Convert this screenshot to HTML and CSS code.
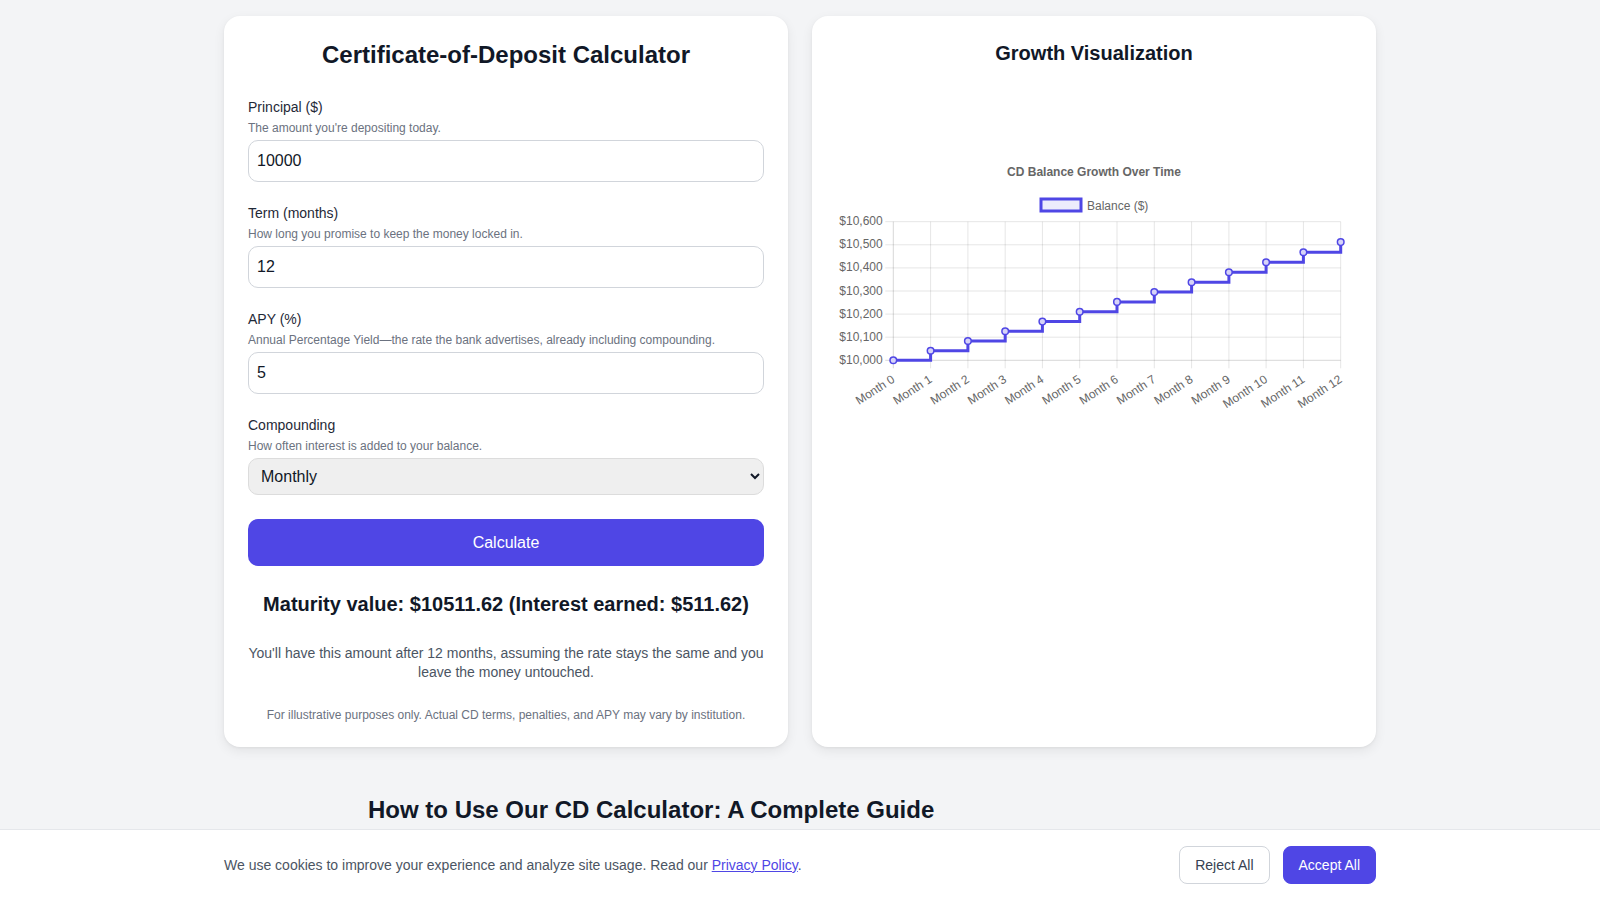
FILE: index.html
```html
<!DOCTYPE html>
<html lang="en">
<head>
  <meta charset="UTF-8"/>
  <meta name="viewport" content="width=device-width,initial-scale=1"/>
  <title>CD Calculator</title>
  <link rel="stylesheet" href="styles.css">
</head>
<body>

  <main class="wrap">
    <section class="card">
      <h1>Certificate-of-Deposit Calculator</h1>
      <form class="form" onsubmit="return false">
        <div class="field">
          <label for="principal">Principal ($)</label>
          <p class="hint">The amount you're depositing today.</p>
          <input id="principal" type="number" value="10000"/>
        </div>
        <div class="field">
          <label for="term">Term (months)</label>
          <p class="hint">How long you promise to keep the money locked in.</p>
          <input id="term" type="number" value="12"/>
        </div>
        <div class="field">
          <label for="apy">APY (%)</label>
          <p class="hint">Annual Percentage Yield—the rate the bank advertises, already including compounding.</p>
          <input id="apy" type="number" value="5"/>
        </div>
        <div class="field">
          <label for="comp">Compounding</label>
          <p class="hint">How often interest is added to your balance.</p>
          <select id="comp">
            <option>Monthly</option>
            <option>Quarterly</option>
            <option>Daily</option>
            <option>Annually</option>
          </select>
        </div>
        <button class="calc-btn" type="submit">Calculate</button>
      </form>
      <h3 class="result">Maturity value: $10511.62 (Interest earned: $511.62)</h3>
      <p class="result-note">You'll have this amount after 12 months, assuming the rate stays the same and you leave the money untouched.</p>
      <p class="disclaimer">For illustrative purposes only. Actual CD terms, penalties, and APY may vary by institution.</p>
    </section>

    <section class="card">
      <h2>Growth Visualization</h2>
      <svg class="chart" viewBox="0 0 516 258" width="516" height="258">
        <text class="chart-title" x="258" y="19.7">CD Balance Growth Over Time</text>
        <rect class="legend-box" x="205" y="47" width="40" height="12"/>
        <text class="legend-text" x="251" y="53.5">Balance ($)</text>

        <g class="grid">
          <line x1="49.3" y1="69.7" x2="504.7" y2="69.7"/>
          <line x1="49.3" y1="92.8" x2="504.7" y2="92.8"/>
          <line x1="49.3" y1="115.9" x2="504.7" y2="115.9"/>
          <line x1="49.3" y1="139" x2="504.7" y2="139"/>
          <line x1="49.3" y1="162.1" x2="504.7" y2="162.1"/>
          <line x1="49.3" y1="185.2" x2="504.7" y2="185.2"/>
          <line x1="94.6" y1="69.7" x2="94.6" y2="216.3"/>
          <line x1="131.9" y1="69.7" x2="131.9" y2="216.3"/>
          <line x1="169.2" y1="69.7" x2="169.2" y2="216.3"/>
          <line x1="206.4" y1="69.7" x2="206.4" y2="216.3"/>
          <line x1="243.7" y1="69.7" x2="243.7" y2="216.3"/>
          <line x1="281" y1="69.7" x2="281" y2="216.3"/>
          <line x1="318.3" y1="69.7" x2="318.3" y2="216.3"/>
          <line x1="355.6" y1="69.7" x2="355.6" y2="216.3"/>
          <line x1="392.9" y1="69.7" x2="392.9" y2="216.3"/>
          <line x1="430.1" y1="69.7" x2="430.1" y2="216.3"/>
          <line x1="467.4" y1="69.7" x2="467.4" y2="216.3"/>
          <line x1="504.7" y1="69.7" x2="504.7" y2="216.3"/>
        </g>
        <g class="axis">
          <line x1="49.3" y1="208.3" x2="504.7" y2="208.3"/>
          <line x1="57.3" y1="69.7" x2="57.3" y2="216.3"/>
        </g>

        <g class="y-labels">
          <text x="46.7" y="69.2">$10,600</text>
          <text x="46.7" y="92.3">$10,500</text>
          <text x="46.7" y="115.4">$10,400</text>
          <text x="46.7" y="138.5">$10,300</text>
          <text x="46.7" y="161.6">$10,200</text>
          <text x="46.7" y="184.7">$10,100</text>
          <text x="46.7" y="207.8">$10,000</text>
        </g>

        <g class="x-labels">
          <text transform="translate(57.3 226) rotate(-33)">Month 0</text>
          <text transform="translate(94.6 226) rotate(-33)">Month 1</text>
          <text transform="translate(131.9 226) rotate(-33)">Month 2</text>
          <text transform="translate(169.2 226) rotate(-33)">Month 3</text>
          <text transform="translate(206.4 226) rotate(-33)">Month 4</text>
          <text transform="translate(243.7 226) rotate(-33)">Month 5</text>
          <text transform="translate(281 226) rotate(-33)">Month 6</text>
          <text transform="translate(318.3 226) rotate(-33)">Month 7</text>
          <text transform="translate(355.6 226) rotate(-33)">Month 8</text>
          <text transform="translate(392.9 226) rotate(-33)">Month 9</text>
          <text transform="translate(430.1 226) rotate(-33)">Month 10</text>
          <text transform="translate(467.4 226) rotate(-33)">Month 11</text>
          <text transform="translate(504.7 226) rotate(-33)">Month 12</text>
        </g>

        <path class="series" d="M57.3 208.3 H94.6 V198.7 H131.9 V189 H169.2 V179.3 H206.4 V169.6 H243.7 V159.8 H281 V149.9 H318.3 V140.1 H355.6 V130.2 H392.9 V120.2 H430.1 V110.2 H467.4 V100.2 H504.7 V90.1"/>
        <g class="points">
          <circle cx="57.3" cy="208.3" r="3.3"/>
          <circle cx="94.6" cy="198.7" r="3.3"/>
          <circle cx="131.9" cy="189" r="3.3"/>
          <circle cx="169.2" cy="179.3" r="3.3"/>
          <circle cx="206.4" cy="169.6" r="3.3"/>
          <circle cx="243.7" cy="159.8" r="3.3"/>
          <circle cx="281" cy="149.9" r="3.3"/>
          <circle cx="318.3" cy="140.1" r="3.3"/>
          <circle cx="355.6" cy="130.2" r="3.3"/>
          <circle cx="392.9" cy="120.2" r="3.3"/>
          <circle cx="430.1" cy="110.2" r="3.3"/>
          <circle cx="467.4" cy="100.2" r="3.3"/>
          <circle cx="504.7" cy="90.1" r="3.3"/>
        </g>
      </svg>
    </section>
  </main>

  <article class="guide">
    <h2>How to Use Our CD Calculator: A Complete Guide</h2>
  </article>

  <div class="cookie-bar">
    <div class="cookie-inner">
      <p>We use cookies to improve your experience and analyze site usage. Read our <a href="#">Privacy Policy</a>.</p>
      <div class="cookie-actions">
        <button class="btn-reject">Reject All</button>
        <button class="btn-accept">Accept All</button>
      </div>
    </div>
  </div>

</body>
</html>
```

FILE: styles.css
```css
*{box-sizing:border-box;margin:0;padding:0}
body{background:#f3f4f6;color:#111827;font-family:"Liberation Sans",Arial,Helvetica,sans-serif}

.wrap{max-width:1152px;margin:0 auto;padding-top:16px;display:grid;grid-template-columns:1fr 1fr;gap:24px}
.card{background:#fff;border-radius:16px;padding:24px;box-shadow:0 4px 12px rgba(0,0,0,.07),0 1px 3px rgba(0,0,0,.05)}
.card h1{font-size:24px;line-height:29px;font-weight:700;text-align:center;margin-bottom:28px}
.card h2{font-size:20px;line-height:26px;font-weight:700;text-align:center}

.form{display:flex;flex-direction:column;gap:21px}
.field label{display:block;font-size:14px;line-height:20px;color:#1f2937}
.field .hint{font-size:12px;line-height:16px;color:#6b7280;margin:3px 0 4px}
.field input{display:block;width:100%;padding:8px;font:16px/24px "Liberation Sans",Arial,sans-serif;color:#111827;border:1px solid #d1d5db;border-radius:10px;background:#fff}
.field select{display:block;width:100%;height:37px;padding:0 8px;font:16px "Liberation Sans",Arial,sans-serif;color:#111827;border:1px solid #dcdcdc;border-radius:10px;background:#efefef}
.calc-btn{margin-top:3px;width:100%;padding:11.5px 16px;font:16px/24px "Liberation Sans",Arial,sans-serif;color:#fff;background:#4f46e5;border:none;border-radius:10px;cursor:pointer}

.result{margin-top:24px;font-size:20px;line-height:28px;font-weight:700;text-align:center;color:#111827}
.result-note{margin:25.5px -4px 0;font-size:14px;line-height:19.6px;text-align:center;color:#4b5563}
.disclaimer{margin-top:24px;font-size:12px;line-height:16px;text-align:center;color:#6b7280}

.chart{display:block;width:516px;height:258px;margin-top:86px;font-family:"Liberation Sans",Helvetica,Arial,sans-serif}
.chart text{font-size:12px;fill:#666}
.chart .chart-title{font-weight:700;text-anchor:middle;dominant-baseline:central}
.chart .legend-text{dominant-baseline:central}
.legend-box{fill:#edecfc;stroke:#4f46e5;stroke-width:3}
.grid line{stroke:rgba(0,0,0,.1);stroke-width:1}
.axis line{stroke:rgba(0,0,0,.16);stroke-width:1}
.y-labels text{text-anchor:end;dominant-baseline:central}
.x-labels text{text-anchor:end;dominant-baseline:central}
.series{fill:none;stroke:#4f46e5;stroke-width:3;stroke-linejoin:miter}
.points circle{fill:#d6d3f8;stroke:#4f46e5;stroke-width:1.5}

.guide{max-width:896px;margin:48px auto 0;padding:0 16px}
.guide h2{font-size:24px;line-height:29px;font-weight:700;color:#111827}

.cookie-bar{position:fixed;left:0;right:0;bottom:0;background:#fff;border-top:1px solid #e5e7eb;padding:16px 0}
.cookie-inner{max-width:1152px;margin:0 auto;display:flex;align-items:center;justify-content:space-between}
.cookie-inner p{font-size:14px;line-height:20px;color:#4b5563}
.cookie-inner a{color:#4f46e5;text-decoration:underline}
.cookie-actions{display:flex;gap:13px}
.cookie-actions button{font:14px/20px "Liberation Sans",Arial,sans-serif;padding:8px 15px;border-radius:8px;cursor:pointer}
.btn-reject{background:#fff;color:#374151;border:1px solid #d1d5db}
.btn-accept{background:#4f46e5;color:#fff;border:1px solid #4f46e5}
```
